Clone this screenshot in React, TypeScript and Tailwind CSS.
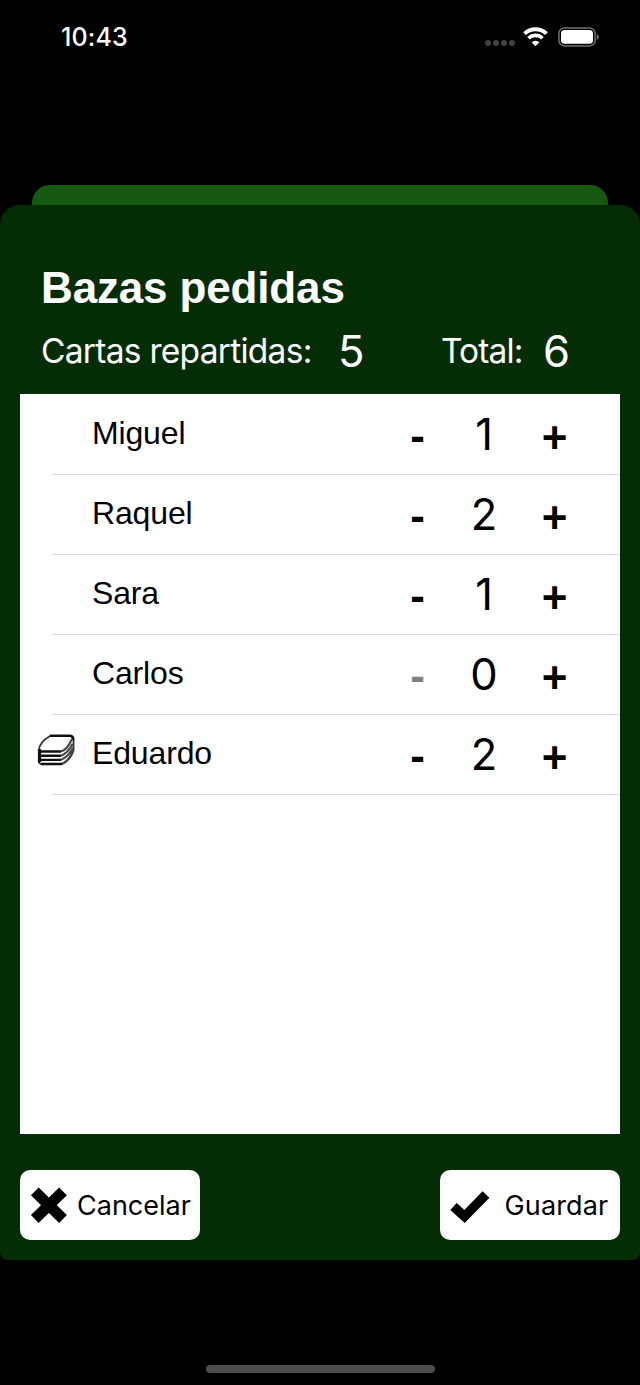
type Player = { name: string; bid: number; dealer?: boolean };

const players: Player[] = [
  { name: "Miguel", bid: 1 },
  { name: "Raquel", bid: 2 },
  { name: "Sara", bid: 1 },
  { name: "Carlos", bid: 0 },
  { name: "Eduardo", bid: 2, dealer: true },
];

function StatusBar() {
  return (
    <div className="flex h-[74px] items-center justify-between pl-[61px] pr-[40px]">
      <span className="text-[25px] leading-[30px] font-medium tracking-[0.100px]">10:43</span>
      <div className="flex items-center">
        <div className="mt-[12px] flex gap-[2px]">
          {[0, 1, 2, 3].map((i) => (
            <span key={i} className="size-[6px] rounded-full bg-[#424242]" />
          ))}
        </div>
        <svg className="ml-[8px] h-[20px] w-[25px]" viewBox="0 0 25 20" fill="none">
          <path d="M1.500 6.700a15.800 15.800 0 0 1 22 0" stroke="#fff" strokeWidth="3.800" />
          <path d="M5.500 11.200a10 10 0 0 1 14 0" stroke="#fff" strokeWidth="3.600" />
          <path d="M12.500 19.300 8.600 15.300a5.500 5.500 0 0 1 7.800 0z" fill="#fff" />
        </svg>
        <svg className="ml-[10px] h-[20px] w-[42px]" viewBox="0 0 42 20" fill="none">
          <rect x="0.900" y="0.900" width="36.200" height="18" rx="5.500" stroke="#707070" strokeWidth="1.500" />
          <rect x="3" y="3" width="32" height="13.800" rx="3.500" fill="#fff" />
          <path d="M38.800 7v6c1.200-.5 2-1.700 2-3s-.8-2.500-2-3z" fill="#777" />
        </svg>
      </div>
    </div>
  );
}

function DeckIcon() {
  return (
    <svg className="h-[34px] w-[40px]" viewBox="0 0 40 34" fill="none" stroke="#111" strokeLinejoin="round">
      <path d="M3 17C3 11 9 6 14 3H34Q38 3 37.500 7V18Q33 29 25 31H5Q2 30 3 27Z" fill="#fff" stroke="#333" strokeWidth="1.800" />
      <path d="M14 2.800H34Q37.500 3 37 7" strokeWidth="2.600" />
      <path d="M3 18.500H25M3 22.700H25M3 26.900H25M5 31H26" strokeWidth="2.400" />
      <path d="M3.500 16V29" strokeWidth="3.200" />
      <path d="M25 18.500Q31 17 36 6M25 22.700Q32 20 36.500 11M25 26.900Q32 24 37 15M26 31Q33 28 37 18" stroke="#444" strokeWidth="2.100" />
    </svg>
  );
}

function PlayerRow({ name, bid, dealer }: Player) {
  return (
    <li className="flex h-[80px] flex-col">
      <div className="flex h-[79px] items-center">
        <div className="flex w-[72px] justify-start pl-[16px] pb-[10px]">{dealer && <DeckIcon />}</div>
        <span className="w-[306px] pb-[3px] font-['Liberation_Sans',sans-serif] text-[32px] leading-[36px] tracking-[-0.150px]">{name}</span>
        <button
          disabled={bid === 0}
          className="w-[39px] pt-[2px] text-center font-['Liberation_Sans',sans-serif] text-[44px] leading-[50px] font-bold disabled:text-[#808080]"
        >
          -
        </button>
        <span className="w-[94px] pb-[2px] text-center text-[43.500px] leading-[52px]">{bid}</span>
        <button className="w-[47px] pt-[6px] text-center font-['Liberation_Sans',sans-serif] text-[44px] leading-[50px] font-bold">
          +
        </button>
      </div>
      <div className="ml-[32px] h-px bg-[#dcdcdd]" />
    </li>
  );
}

export default function App() {
  return (
    <main className="flex h-[1385px] w-[640px] flex-col overflow-hidden bg-black font-['Inter',sans-serif] text-white">
      <StatusBar />
      <div className="mx-[32px] mt-[111px] h-[20px] shrink-0 rounded-t-[18px] bg-[#165911]" />
      <section className="flex h-[1055px] shrink-0 flex-col rounded-t-[20px] rounded-b-[8px] bg-[#052d05] px-[20px]">
        <header className="h-[189px] pt-[58px] pl-[21px]">
          <h1 className="font-['Liberation_Sans',sans-serif] text-[44px] leading-[50px] font-bold tracking-[-0.150px]">Bazas pedidas</h1>
          <div className="mt-[12px] flex h-[52px] items-center">
            <span className="w-[297px] text-[33.500px] leading-[40px] tracking-[-0.720px]">Cartas repartidas:</span>
            <span className="w-[103px] text-[43.500px] leading-[52px]">5</span>
            <span className="w-[102px] text-[33.500px] leading-[40px] tracking-[-0.900px]">Total:</span>
            <span className="text-[43.500px] leading-[52px]">6</span>
          </div>
        </header>
        <ul className="h-[740px] bg-white pt-px text-black">
          {players.map((player) => (
            <PlayerRow key={player.name} {...player} />
          ))}
        </ul>
        <footer className="mt-[36px] flex justify-between text-black">
          <button className="flex h-[70px] w-[180px] items-center rounded-[10px] bg-white pl-[10px]">
            <svg className="size-[38px]" viewBox="0 0 38 38" fill="none" stroke="#000" strokeWidth="11">
              <path d="M4.800 5.300 33 33M33 5.300 4.800 33" />
            </svg>
            <span className="ml-[9px] mt-[2px] text-[27px] leading-[34px]">Cancelar</span>
          </button>
          <button className="flex h-[70px] w-[180px] items-center rounded-[10px] bg-white pl-[10px]">
            <svg className="h-[38px] w-[40px]" viewBox="0 0 40 38" fill="none" stroke="#000" strokeWidth="9.500">
              <path d="M3.500 20.500 14.500 30.500 36 8.500" />
            </svg>
            <span className="ml-[14.500px] mt-[2px] text-[27px] leading-[34px] tracking-[0.150px]">Guardar</span>
          </button>
        </footer>
      </section>
      <div className="mx-auto mt-[105px] h-[8px] w-[229px] shrink-0 rounded-full bg-[#4d4d4d]" />
    </main>
  );
}
